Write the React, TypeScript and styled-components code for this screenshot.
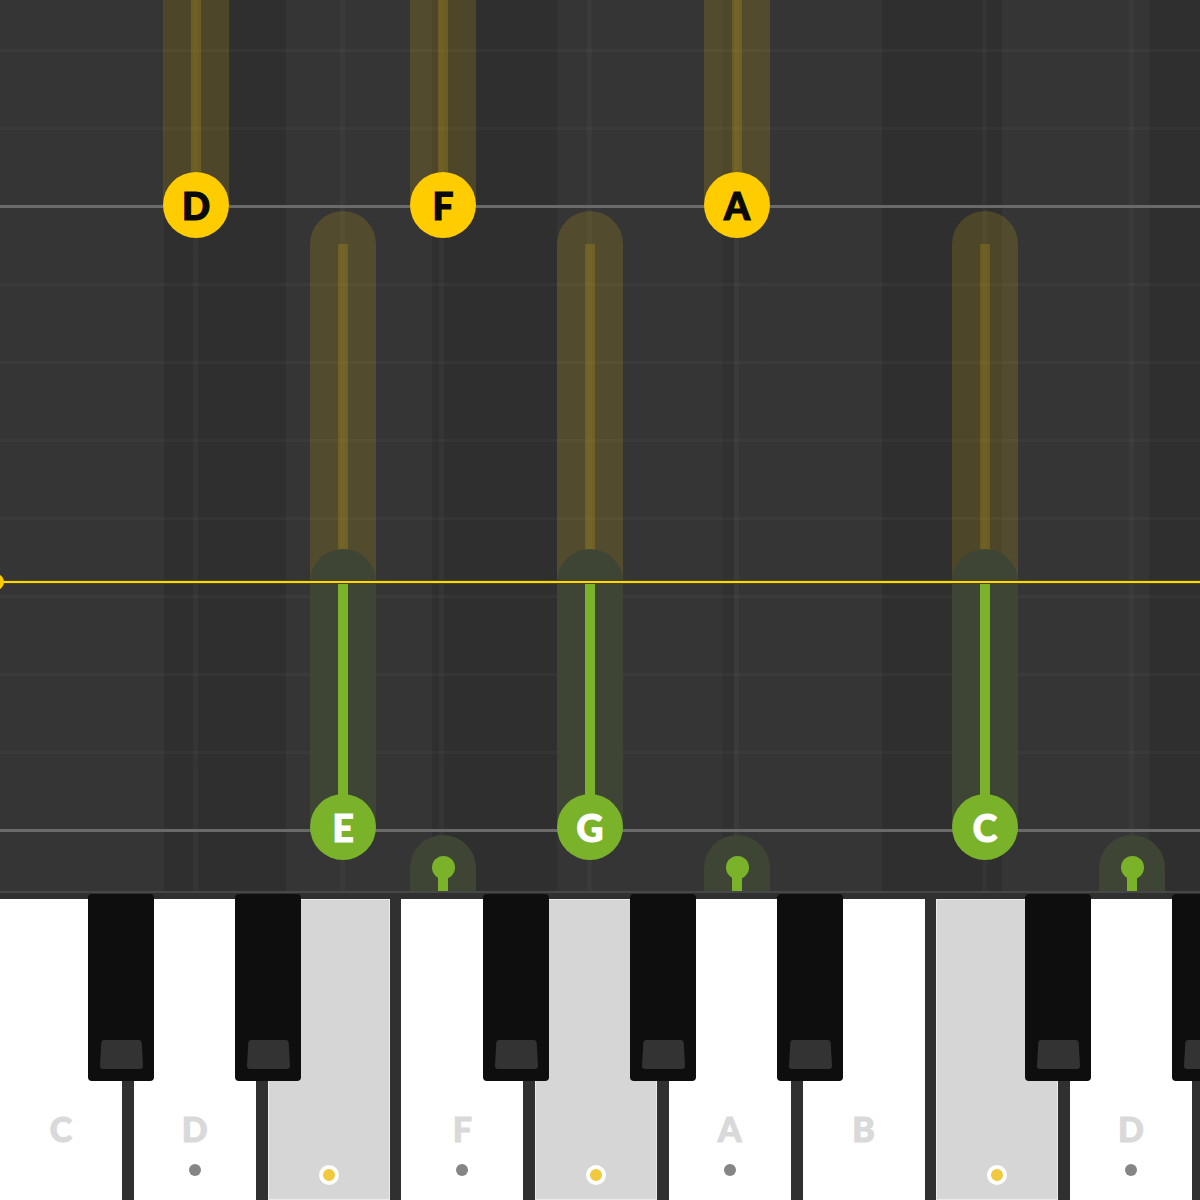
import React from "react";
import styled, { createGlobalStyle } from "styled-components";

const Global = createGlobalStyle`
  html, body { margin: 0; padding: 0; background: #353535; }
  #root { width: 1200px; height: 1200px; }
`;

const Screen = styled.div`
  width: 1200px;
  height: 1200px;
  overflow: hidden;
  display: flex;
  flex-direction: column;
  font-family: "Lato", "Liberation Sans", sans-serif;
`;

/* ---------- piano roll ---------- */

const PLAYHEAD = 582;
const laneLines = [196, 343, 442, 590, 737, 985, 1132];
const laneGradient = `linear-gradient(to right, ${laneLines
  .map((x) => {
    const a = x - 2.5;
    const b = x + 2.5;
    return `transparent ${a}px, rgba(255,255,255,0.028) ${a}px, rgba(255,255,255,0.028) ${b}px, transparent ${b}px`;
  })
  .join(", ")})`;

const Roll = styled.div`
  position: relative;
  flex: 0 0 891px;
  overflow: hidden;
  background:
    linear-gradient(
      to bottom,
      transparent 205px,
      #6a6a6a 205px,
      #6a6a6a 208px,
      transparent 208px,
      transparent 829px,
      #6a6a6a 829px,
      #6a6a6a 832px,
      transparent 832px
    ),
    repeating-linear-gradient(
      to bottom,
      transparent 0px,
      transparent 49px,
      rgba(255, 255, 255, 0.026) 49px,
      rgba(255, 255, 255, 0.026) 52px,
      transparent 52px,
      transparent 78px
    ),
    ${laneGradient},
    linear-gradient(
      to right,
      #353535 164px,
      #2f2f2f 164px,
      #2f2f2f 286px,
      #353535 286px,
      #353535 432px,
      #2f2f2f 432px,
      #2f2f2f 557px,
      #353535 557px,
      #353535 722px,
      #313131 722px,
      #313131 734px,
      #353535 734px,
      #353535 882px,
      #2f2f2f 882px,
      #2f2f2f 1002px,
      #353535 1002px,
      #353535 1149px,
      #2f2f2f 1149px
    );
`;

/* one note = one column placed on the roll canvas; its parts flow inside it */
const NoteColumn = styled.div<{ $x: number; $top: number }>`
  position: absolute;
  left: ${(p) => p.$x - 33}px;
  top: ${(p) => p.$top}px;
  width: 66px;
  display: flex;
  flex-direction: column;
  align-items: center;
`;

const Segment = styled.div<{ $tone: "yellow" | "green"; $round?: boolean; $len: number; $overlap?: boolean }>`
  width: 66px;
  height: ${(p) => p.$len}px;
  flex: none;
  display: flex;
  justify-content: center;
  box-sizing: border-box;
  padding-top: ${(p) => (p.$round ? 33 : 0)}px;
  margin-top: ${(p) => (p.$overlap ? -33 : 0)}px;
  border-radius: ${(p) => (p.$round ? "33px 33px 0 0" : "0")};
  background: ${(p) => (p.$tone === "yellow" ? "rgba(255, 204, 0, 0.145)" : "#3e4535")};
`;

const Stem = styled.div<{ $tone: "yellow" | "green" }>`
  width: 10px;
  background: ${(p) => (p.$tone === "yellow" ? "rgba(255, 204, 0, 0.17)" : "#7ab32a")};
`;

const Head = styled.div<{ $tone: "yellow" | "green" }>`
  flex: none;
  width: 66px;
  height: 66px;
  margin-top: -33px;
  border-radius: 50%;
  display: flex;
  align-items: center;
  justify-content: center;
  background: ${(p) => (p.$tone === "yellow" ? "#ffcc00" : "#7ab32a")};
  color: ${(p) => (p.$tone === "yellow" ? "#0a0a0a" : "#ffffff")};
  -webkit-text-stroke: 1.2px ${(p) => (p.$tone === "yellow" ? "#0a0a0a" : "#ffffff")};
  font-size: 37px;
  font-weight: 900;
  line-height: 1;
  position: relative;
`;

const PassingBand = styled.div`
  width: 66px;
  height: 60px;
  display: flex;
  flex-direction: column;
  align-items: center;
  box-sizing: border-box;
  padding-top: 21px;
  border-radius: 33px 33px 0 0;
  background: #3e4535;
`;

const SmallHead = styled.div`
  flex: none;
  width: 23px;
  height: 23px;
  border-radius: 50%;
  background: #7ab32a;
`;

const SmallStem = styled.div`
  flex: 1;
  width: 10px;
  margin-top: -2px;
  background: #7ab32a;
`;

const Playhead = styled.div`
  position: absolute;
  left: 0;
  right: 0;
  top: ${PLAYHEAD - 2}px;
  height: 2px;
  background: #ffd800;
  border-top: 1px solid rgba(10, 18, 50, 0.75);
  border-bottom: 1px solid rgba(10, 18, 50, 0.75);
`;

const PlayheadKnob = styled.div`
  position: absolute;
  left: -12px;
  top: -7px;
  width: 16px;
  height: 16px;
  border-radius: 50%;
  background: #ffcc00;
`;

type Note = { name: string; x: number };

const upcoming: Note[] = [
  { name: "D", x: 196 },
  { name: "F", x: 443 },
  { name: "A", x: 737 },
];

const played: Note[] = [
  { name: "E", x: 343 },
  { name: "G", x: 590 },
  { name: "C", x: 985 },
];

const passing = [443, 737, 1132];

const PLAYED_TOP = 211;
const PLAYED_END = 827;

function Upcoming({ note }: { note: Note }) {
  return (
    <NoteColumn $x={note.x} $top={-40}>
      <Segment $tone="yellow" $len={245}>
        <Stem $tone="yellow" />
      </Segment>
      <Head $tone="yellow">{note.name}</Head>
    </NoteColumn>
  );
}

function Played({ note }: { note: Note }) {
  return (
    <NoteColumn $x={note.x} $top={PLAYED_TOP}>
      <Segment $tone="yellow" $round $len={PLAYHEAD - PLAYED_TOP}>
        <Stem $tone="yellow" />
      </Segment>
      <Segment $tone="green" $round $overlap $len={PLAYED_END - PLAYHEAD + 33}>
        <Stem $tone="green" />
      </Segment>
      <Head $tone="green">{note.name}</Head>
    </NoteColumn>
  );
}

function Passing({ x }: { x: number }) {
  return (
    <NoteColumn $x={x} $top={835}>
      <PassingBand>
        <SmallHead />
        <SmallStem />
      </PassingBand>
    </NoteColumn>
  );
}

/* ---------- keyboard ---------- */

const Keyboard = styled.div`
  position: relative;
  flex: 1;
  display: flex;
  gap: 11.75px;
  padding-top: 6px;
  background: #303030;
  border-top: 2px solid #474747;
  overflow: hidden;
`;

const WhiteKey = styled.div<{ $pressed: boolean }>`
  flex: 0 0 122px;
  display: flex;
  flex-direction: column;
  align-items: center;
  padding-top: 213px;
  background: ${(p) => (p.$pressed ? "#d6d6d6" : "#ffffff")};
  box-shadow: ${(p) => (p.$pressed ? "inset 0 0 0 1px #ebebeb" : "none")};
`;

const KeyLabel = styled.div`
  height: 34px;
  font-size: 34px;
  line-height: 34px;
  font-weight: 900;
  color: #d9d9d9;
  -webkit-text-stroke: 1px #d9d9d9;
`;

const HintDot = styled.div`
  margin-top: 18px;
  width: 12px;
  height: 12px;
  border-radius: 50%;
  background: #858585;
`;

const ActiveDot = styled.div`
  margin-top: 19px;
  width: 12px;
  height: 12px;
  border-radius: 50%;
  background: #f2c83c;
  border: 4px solid #ffffff;
`;

const BlackKey = styled.div<{ $left: number }>`
  position: absolute;
  top: 1px;
  left: ${(p) => p.$left}px;
  width: 66px;
  height: 187px;
  border-radius: 4px;
  background: #0e0e0e;
  display: flex;
  flex-direction: column;
  justify-content: flex-end;
  align-items: center;
  padding-bottom: 12px;
  box-sizing: border-box;
`;

const KeyCap = styled.svg`
  display: block;
  margin-left: 1px;
`;

type White = { label: string; pressed: boolean; dot: boolean };

const whites: White[] = [
  { label: "C", pressed: false, dot: false },
  { label: "D", pressed: false, dot: true },
  { label: "", pressed: true, dot: true },
  { label: "F", pressed: false, dot: true },
  { label: "", pressed: true, dot: true },
  { label: "A", pressed: false, dot: true },
  { label: "B", pressed: false, dot: false },
  { label: "", pressed: true, dot: true },
  { label: "D", pressed: false, dot: true },
];

const blackLefts = [88, 235, 483, 630, 777, 1025, 1172];

export default function App() {
  return (
    <Screen>
      <Global />
      <Roll>
        {upcoming.map((n) => (
          <Upcoming key={n.name} note={n} />
        ))}
        {played.map((n) => (
          <Played key={n.name} note={n} />
        ))}
        {passing.map((x) => (
          <Passing key={x} x={x} />
        ))}
        <Playhead>
          <PlayheadKnob />
        </Playhead>
      </Roll>
      <Keyboard>
        {whites.map((w, i) => (
          <WhiteKey key={i} $pressed={w.pressed}>
            <KeyLabel>{w.label}</KeyLabel>
            {w.dot && (w.pressed ? <ActiveDot /> : <HintDot />)}
          </WhiteKey>
        ))}
        {blackLefts.map((left) => (
          <BlackKey key={left} $left={left}>
            <KeyCap width="43" height="29" viewBox="0 0 43 29">
              <path
                d="M4 0 H39 Q41.5 0 41.7 2.5 L43 25.5 Q43.2 29 40 29 H3 Q-0.2 29 0 25.5 L1.3 2.5 Q1.5 0 4 0 Z"
                fill="#333333"
              />
            </KeyCap>
          </BlackKey>
        ))}
      </Keyboard>
    </Screen>
  );
}
